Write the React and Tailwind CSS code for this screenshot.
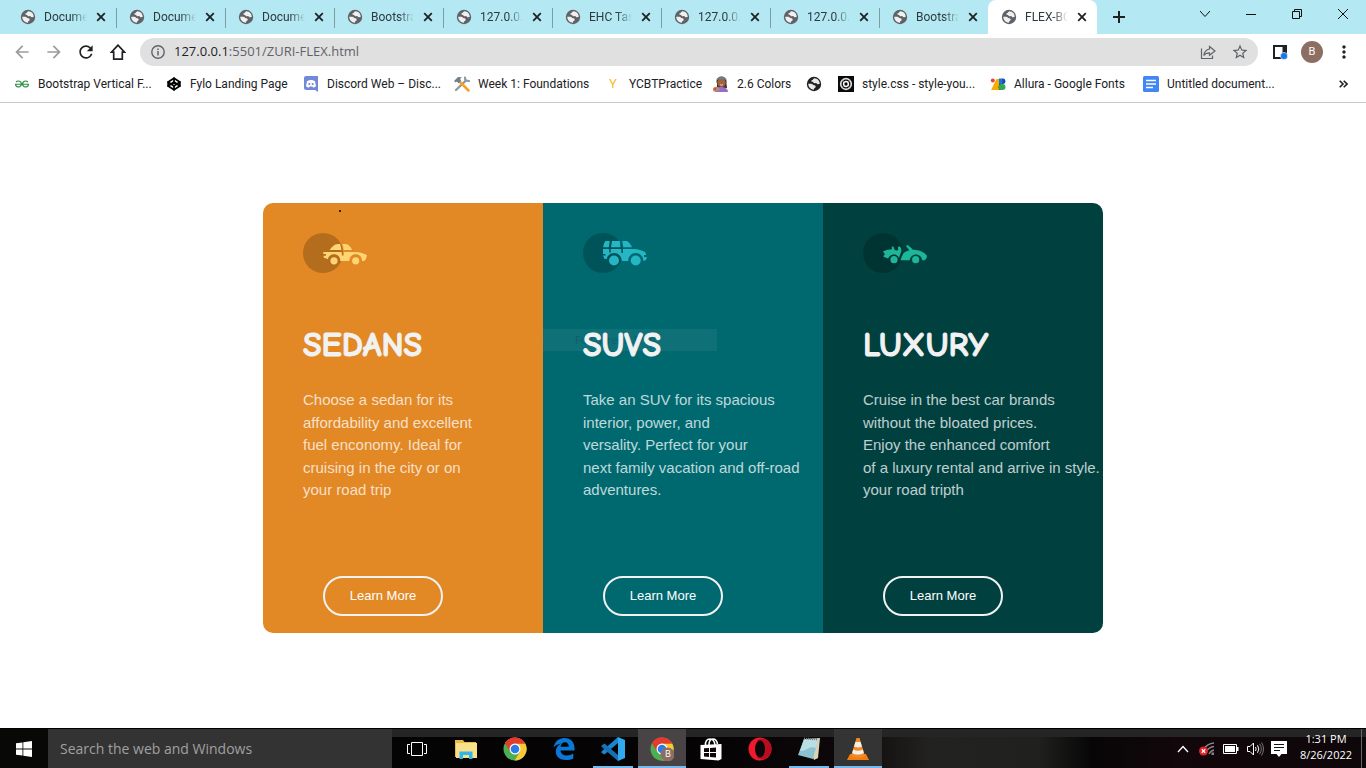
import React from "react";
import { MdArrowBack, MdArrowForward, MdRefresh, MdMoreVert, MdStarBorder } from "react-icons/md";
import { SiGeeksforgeeks } from "react-icons/si";
import { Codepen } from "lucide-react";

const Globe = ({ className = "text-[#5f6368]" }) => (
  <svg viewBox="0 0 16 16" className={"size-4 shrink-0 " + className} aria-hidden="true">
    <circle cx="8" cy="8" r="7.2" fill="currentColor" />
    <path
      d="M8.3 2.300 C7.200 3 6.800 4.300 5.300 4.600 C4.900 5.600 6 6 7 6 C7.700 6.300 7.400 7.200 8.300 7.300 C9 7.300 9.400 6.800 10.100 7 C10.900 7.200 10.800 8.200 11.600 8.200 L13.700 7.900 C13.800 5 11.600 2.400 8.300 2.300Z M2.200 7.800 C2.400 11.300 5 13.600 8 13.800 L8.100 12.500 C8.400 11.800 9.500 11.800 9.700 10.900 C9.800 9.900 9.100 9.200 8 9.200 C6.900 9.100 6.600 7.900 5.300 7.800Z"
      fill="#fff" fillOpacity=".9"
    />
  </svg>
);

const tabs = ["Documents", "Documents", "Documents", "Bootstrap 5", "127.0.0.1:5501", "EHC Tasks list", "127.0.0.1:5501", "127.0.0.1:5501", "Bootstrap 5", "FLEX-BOX"];

function Tab({ title, active }) {
  return (
    <div className={"relative flex h-[34px] w-[109px] shrink items-center pl-[13px] pr-2 " + (active ? "rounded-t-lg bg-white" : "")}>
      <Globe />
      <a href="#tab" className="ml-2 w-[46px] overflow-hidden whitespace-nowrap text-[12px] text-[#2c3a3e] [mask-image:linear-gradient(to_right,black_65%,transparent)]">
        {title}
      </a>
      <button aria-label={"Close " + title} className="ml-1.5 flex size-4 items-center justify-center">
        <svg viewBox="0 0 10 10" className="size-2.5"><path d="M1.2 1.2l7.6 7.6M8.8 1.2L1.2 8.8" stroke="#202124" strokeWidth="1.8" /></svg>
      </button>
      {!active && <span className="absolute -right-px top-2 h-5 w-px bg-[#7b9da4]" />}
    </div>
  );
}

const Discord = () => (
  <svg viewBox="0 0 16 16" className="size-4"><path d="M1 2a2 2 0 012-2h12v16l-3-2H3a2 2 0 01-2-2z" fill="#7289da" /><path d="M4 5.2c2.4-1.5 5.600-1.500 8 0l1 5c-1.200 1-2 1.200-3 1.300l-.7-1H6.700l-.7 1c-1-.1-1.800-.3-3-1.300z" fill="#fff" /><circle cx="6.300" cy="8" r="1.100" fill="#7289da" /><circle cx="9.700" cy="8" r="1.100" fill="#7289da" /></svg>
);
const Tools = () => (
  <svg viewBox="0 0 16 16" className="size-4"><path d="M2 14L12 4.500" stroke="#8b9aa5" strokeWidth="2.400" strokeLinecap="round" /><path d="M11 1.500l.4 3 3.600.5" fill="none" stroke="#8b9aa5" strokeWidth="2.200" strokeLinecap="round" strokeLinejoin="round" /><path d="M5.500 5.500l9 9" stroke="#ff9d1c" strokeWidth="2.500" strokeLinecap="round" /><path d="M0 5l4-4 4 .2-1.800 1.600L7 5 4.500 7.300 2.800 5.400 1.700 6.400z" fill="#6e808c" /></svg>
);
const Artist = () => (
  <svg viewBox="0 0 16 16" className="size-4"><circle cx="8.500" cy="5.500" r="5" fill="#46302c" /><path d="M4 4h9l1 8H4z" fill="#46302c" /><path d="M2 16c0-4 3-5 6-5s7 1 7 5z" fill="#9b6bc9" /><circle cx="8.500" cy="6.800" r="4.200" fill="#a0623f" /><path d="M3.500 4.200C3.500-.5 13.500-.5 13.500 4.200c-3-1.400-7-1.400-10 0z" fill="#6b7f8c" /><path d="M0 12.500c1-2.500 6-2.300 7 .5.500 2-6 3.500-7 1.500z" fill="#c98756" /><circle cx="2.200" cy="13" r="1.100" fill="#e33d4e" /><circle cx="5" cy="13.500" r="1" fill="#44b7e8" /><path d="M7 8.600q1.500 1.200 3 0" stroke="#fff" strokeWidth=".7" fill="none" /></svg>
);
const Spiral = () => (
  <svg viewBox="0 0 16 16" className="size-4"><path fill="#0a0a0a" d="M0 0h16v16H0z" /><circle cx="8" cy="8" r="5.300" fill="none" stroke="#ddd" strokeWidth="1.700" /><circle cx="8" cy="8" r="2.400" fill="none" stroke="#fff" strokeWidth="1.500" /><path d="M4 3.500L7 6M12 12.500L9 10M12.500 4L10 7M3.500 12L6 9" stroke="#999" strokeWidth=".6" /></svg>
);
const Fonts = () => (
  <svg viewBox="0 0 16 16" className="size-4"><path d="M6.500 3H9v11H7.500L4.500 14H1z" fill="#fbab00" /><circle cx="2.800" cy="4.500" r="2" fill="#ea4335" /><path d="M9 2.500h3.500a2.700 2.700 0 010 5.500H9z" fill="#1a73e8" /><path d="M12.500 2.500a2.700 2.700 0 010 5.500z" fill="#174ea6" /><path d="M9 8h3.500a3 3 0 010 6H9z" fill="#34a853" /><path d="M9 8h3a3 3 0 00-1 6H9z" fill="#0d652d" /></svg>
);
const Docs = () => (
  <svg viewBox="0 0 16 16" className="size-4"><rect width="16" height="16" rx="1.500" fill="#4285f4" /><path d="M3 4.500h10M3 8h10M3 11.500h7" stroke="#fff" strokeWidth="1.500" /></svg>
);

const bookmarks = [
  ["Bootstrap Vertical F...", <SiGeeksforgeeks className="size-3.5 text-[#2f8d46]" />],
  ["Fylo Landing Page", <Codepen strokeWidth={3} className="size-3.5 text-black" />],
  ["Discord Web – Disc...", <Discord />],
  ["Week 1: Foundations", <Tools />],
  ["YCBTPractice", <span className="text-[13px] text-[#f5bd27]">Y</span>],
  ["2.6 Colors", <Artist />],
  ["", <Globe className="text-[#202124]" />],
  ["style.css - style-you...", <Spiral />],
  ["Allura - Google Fonts", <Fonts />],
  ["Untitled document...", <Docs />],
];

const winBtn = "flex h-7 w-[46px] items-center justify-center";
const toolBtn = "flex h-8 w-8 shrink-0 items-center justify-center";

function Browser() {
  return (
    <header className="font-[Roboto,'Open_Sans',sans-serif]">
      <div className="flex h-[34px] bg-[#b4e8f2] pl-[7px]">
        <nav aria-label="Tabs" className="flex">
          {tabs.map((t, i) => <Tab key={i} title={t} active={i === 9} />)}
        </nav>
        <button aria-label="New tab" className="flex w-11 items-center justify-center">
          <svg viewBox="0 0 12 12" className="size-3"><path d="M6 0v12M0 6h12" stroke="#202124" strokeWidth="2" /></svg>
        </button>
        <div className="ml-auto flex">
          <button aria-label="Search tabs" className={winBtn}><svg viewBox="0 0 12 8" className="h-2 w-3"><path d="M1 1l5 5.500L11 1" fill="none" stroke="#111" /></svg></button>
          <button aria-label="Minimize" className={winBtn}><svg viewBox="0 0 10 10" className="size-2.5"><path d="M0 5.500h10" stroke="#111" /></svg></button>
          <button aria-label="Restore" className={winBtn}><svg viewBox="0 0 10 10" className="size-2.5"><path d="M.5 2.500h7v7h-7zM2.500 2.500v-2h7v7h-2" fill="none" stroke="#111" /></svg></button>
          <button aria-label="Close window" className={winBtn}><svg viewBox="0 0 10 10" className="size-2.5"><path d="M0 0l10 10M10 0L0 10" stroke="#111" /></svg></button>
        </div>
      </div>
      <div className="flex h-9 items-center bg-white px-1.5">
        <button aria-label="Back" className={toolBtn}><MdArrowBack className="size-5 text-[#9a9c9f]" /></button>
        <button aria-label="Forward" className={toolBtn}><MdArrowForward className="size-5 text-[#9a9c9f]" /></button>
        <button aria-label="Reload" className={toolBtn}><MdRefresh className="size-5 text-[#202124]" /></button>
        <button aria-label="Home" className={toolBtn}>
          <svg viewBox="0 0 16 16" className="size-4"><path d="M8 1.200L1.500 8.200H3.700v7h8.600v-7h2.200z" fill="none" stroke="#202124" strokeWidth="1.700" /></svg>
        </button>
        <div className="mx-1.5 flex h-7 flex-1 items-center rounded-full bg-[#e0e0e0] pl-[11px] pr-0.5">
          <svg viewBox="0 0 14 14" className="size-3.5 shrink-0"><circle cx="7" cy="7" r="6.200" fill="none" stroke="#5f6368" strokeWidth="1.400" /><path d="M7 6v4.500M7 3.500V5" stroke="#5f6368" strokeWidth="1.500" /></svg>
          <label className="ml-[9px] flex min-w-0 flex-1 font-['Open_Sans','Noto_Sans',sans-serif] text-[13px] text-[#202124]">
            <span>127.0.0.1</span>
            <input aria-label="Address" defaultValue=":5501/ZURI-FLEX.html" className="min-w-0 flex-1 bg-transparent text-[#5f6368] outline-none" />
          </label>
          <button aria-label="Share" className="flex w-8 justify-center"><svg viewBox="0 0 16 16" className="size-4"><path d="M1.500 4.500v10h11v-3" fill="none" stroke="#5f6368" strokeWidth="1.200" /><path d="M9.500 2.500L15 7l-5.500 4.300V8.800C7 8.800 5 9.800 3.800 11.500 4.300 7.500 6.500 5.500 9.500 5z" fill="none" stroke="#5f6368" strokeWidth="1.200" /></svg></button>
          <button aria-label="Bookmark this page" className="flex w-8 justify-center"><MdStarBorder className="size-[18px] text-[#5f6368]" /></button>
        </div>
        <button aria-label="Side panel" className={toolBtn}><svg viewBox="0 0 16 16" className="size-4"><path d="M1 1h14v14H1z" fill="#202124" /><path d="M3 3h7.500v10H3z" fill="#fff" /><circle cx="12" cy="12" r="3.600" fill="#1a73e8" stroke="#fff" strokeWidth=".6" /></svg></button>
        <button aria-label="Profile" className={toolBtn}><span className="flex size-[22px] items-center justify-center rounded-full bg-[#8d6e63] text-[11px] text-white">B</span></button>
        <button aria-label="Menu" className={toolBtn}><MdMoreVert className="size-5 text-[#202124]" /></button>
      </div>
      <nav aria-label="Bookmarks" className="flex h-[33px] items-center border-b border-[#c8c8c8] bg-white pb-1 pl-3.5 pr-[18px]">
        <div className="grid flex-1 grid-cols-[152px_137px_151px_151px_108px_93px_32px_152px_153px_auto]">
          {bookmarks.map(([label, icon], i) => (
            <a key={i} href="#bookmark" aria-label={label || "Bookmark"} className="flex h-5 items-center gap-2 whitespace-nowrap text-[12px] text-[#202124]">
              <span className="flex w-4 shrink-0 justify-center">{icon}</span>{label}
            </a>
          ))}
        </div>
        <button aria-label="More bookmarks"><svg viewBox="0 0 9 8" className="h-2 w-[9px]"><path d="M.7.800L4 4 .7 7.200M4.700.8L8 4 4.700 7.200" fill="none" stroke="#202124" strokeWidth="1.600" /></svg></button>
      </nav>
    </header>
  );
}

const Sedan = () => (
  <svg viewBox="0 0 64 40" className="h-10 w-16">
    <circle cx="20" cy="20" r="20" fill="#000" fillOpacity=".2" />
    <g fill="#ffd473">
      <path d="M26.500 17C29 14 31.500 11 35 11h2c.8 2 1.200 4 1.400 6zM39.300 11H42c3.500 0 5.800 3 7.200 6h-8.600c-.1-2.200-.5-4.200-1.300-6z" />
      <path d="M20.500 19H38.600c.2 1.300.3 2.300.3 3.500h1.900c0-1.300 0-2.400-.1-3.500h11.200c5 .2 9.500 1.400 12 3-.2 2.300-1 5-2.800 6H59c.2-3.800-2.500-6.800-6.300-6.800s-6.500 3-6.300 6.800h-9.100c.2-3.800-2.500-6.800-6.300-6.800-3 0-5.400 2-6.200 4.700-1.400-.2-3-.6-4.300-1.600l.2-1.600h2.300v-1.600h-2.800z" />
      <circle cx="31" cy="27.800" r="3.600" /><circle cx="52.700" cy="27.800" r="3.600" />
    </g>
  </svg>
);
const Suv = () => (
  <svg viewBox="0 0 64 40" className="h-10 w-16">
    <circle cx="20" cy="20" r="20" fill="#000" fillOpacity=".2" />
    <g fill="#25b5c3">
      <path d="M22.500 8h4.300l-1 6.200h-5.600c.2-2.500 1-4.700 2.300-6.200zM29 8h7.800l.8 6.200H28zM39.300 8H44c2.300 1.500 4 3.800 5 6.200h-8.700z" />
      <path d="M20 16h6.200v3.500h1.500V16h10.500l.3 4h1.500L39.800 16H52c4 .4 8 1.500 10.500 3.500l.7 2.500H61v2h3l-.8 2.500c-.7 1-1.700 1.400-2.900 1.500.2-4.500-3.300-8-7.600-8-4.200 0-7.700 3.500-7.500 8h-6.500c.2-4.500-3.300-8-7.600-8-3.700 0-6.700 2.500-7.400 6h-2.200L20 22.500h2.500V21H20z" />
      <circle cx="31" cy="27.500" r="5" /><circle cx="52.700" cy="27.500" r="5" />
    </g>
  </svg>
);
const Luxury = () => (
  <svg viewBox="0 0 64 40" className="h-10 w-16">
    <circle cx="20" cy="20" r="20" fill="#000" fillOpacity=".2" />
    <g fill="#1db699">
      <path d="M20 18.500c3-1.500 6.500-2 9-2.200l-.3-2.600 1.700-.2 1.300 3.500c1.200.6 2.300.6 3.400.1L35 13.800l2-.3c1.500 2.200 1.600 4 1.100 5.500-.6 2-1.600 4.200-2.200 6.200-.3-2-2.200-3.800-4.900-3.800-3.100 0-5.100 2-5.800 4-2-.4-4-1.200-5-2.200l1.700-2z" />
      <path d="M43 13l1.500-1c2.500 1.800 4.500 3.400 5.300 4.800 5.500 0 11.700 2 14.200 6.200-.2 2-1 3.500-2.500 4.300h-2.300c-.3-3.400-2.900-5.900-6.200-5.900s-6 2.500-6.300 5.900h-9.200c1-3.500 2.500-7.500 5-8.500l3.800-1.500z" />
      <circle cx="31" cy="26.700" r="3.600" /><circle cx="52.700" cy="26.700" r="3.600" />
    </g>
  </svg>
);

const cars = [
  { name: "SEDANS", Icon: Sedan, bg: "bg-[#e28825]", lines: ["Choose a sedan for its", "affordability and excellent", "fuel enconomy. Ideal for", "cruising in the city or on", "your road trip"] },
  { name: "SUVS", Icon: Suv, bg: "bg-[#006970]", lines: ["Take an SUV for its spacious", "interior, power, and", "versality. Perfect for your", "next family vacation and off-road", "adventures."] },
  { name: "LUXURY", Icon: Luxury, bg: "bg-[#004140]", lines: ["Cruise in the best car brands", "without the bloated prices.", "Enjoy the enhanced comfort", "of a luxury rental and arrive in style.", "your road tripth"] },
];

function Card({ car, index }) {
  return (
    <section className={"relative flex flex-col items-start pb-[17px] pl-10 pt-[30px] " + car.bg}>
      {index === 0 && <span className="absolute left-[76px] top-[7px] size-0.5 rounded-full bg-black" />}
      {index === 1 && (
        <span className="absolute left-0 top-[126px] flex h-[22px] w-[174px] items-center bg-[#0f7078] pl-8 font-['Open_Sans',sans-serif] text-[11px] text-[#0c6067]">Full-screen Snip</span>
      )}
      <car.Icon />
      <h2 className="relative mt-[52px] font-['Comic_Sans_MS','Comic_Neue','Noto_Sans',sans-serif] text-[34px] font-bold leading-10 text-[#f2f2f2] [-webkit-text-stroke:1px_#f2f2f2]">{car.name}</h2>
      <p className="mb-[74px] mt-6 whitespace-nowrap text-[15px] leading-normal text-white/75">
        {car.lines.map((l, i) => <React.Fragment key={i}>{l}<br /></React.Fragment>)}
      </p>
      <button className="ml-5 h-10 w-[120px] rounded-full border-2 border-[#f2f2f2] text-[13px] font-medium text-white">Learn More</button>
    </section>
  );
}

const Chrome = ({ badge }) => (
  <svg viewBox="0 0 24 24" className="size-6">
    <circle cx="12" cy="12" r="11.500" fill="#4caf50" />
    <path d="M12 12L2 6.200A11.500 11.500 0 0122 6.300z" fill="#e33b2e" />
    <path d="M12 6.500h10.200A11.500 11.500 0 0111.700 23.500L17 14.500z" fill="#fcc934" />
    <path d="M2 6.200L7.300 15 12 6.500h10A11.500 11.500 0 002 6.200z" fill="#e33b2e" />
    <circle cx="12" cy="12" r="5.500" fill="#fff" /><circle cx="12" cy="12" r="4.300" fill="#2a7de9" />
    {badge && <circle cx="17.500" cy="17.500" r="7" fill="#8d6e63" />}
  </svg>
);
const Explorer = () => (
  <svg viewBox="0 0 24 24" className="size-6"><path d="M1 3h8l1.500 2H22v15H1z" fill="#e9b94b" /><path d="M2 6h21v15H2z" fill="#fbe08c" /><path d="M5.500 22v-7.500h13V22h-3.500v-4H9v4z" fill="#2fb6ea" /></svg>
);
const Edge = () => (
  <svg viewBox="0 0 24 24" className="size-6"><path d="M1.500 11C2.500 4.500 7 1 12.500 1 18.500 1 22.500 5 22.500 11v2.500H8.500c.2 3.500 3 5 6.300 5 2.400 0 4.700-.7 6.500-1.900v4.800C19.200 22.500 16.500 23 14 23 7.800 23 3.800 19.500 3.800 14.500c0-3.500 2-6.500 5.300-8C4.900 7 2.600 9 1.500 11zM8.600 9.800h8.200C16.800 7 15.300 5.300 12.800 5.300c-2.300 0-3.900 1.900-4.200 4.500z" fill="#0a78d7" /></svg>
);
const Code = () => (
  <svg viewBox="0 0 24 24" className="size-6"><path d="M17 0v6L3.500 17.500.500 15.800v-1.300z" fill="#1887d2" /><path d="M.500 8.500l3-2L17 18v6L.500 9.800z" fill="#1672b6" /><path d="M17 0l7 3v18l-7 3z" fill="#32a9ef" /></svg>
);
const Store = () => (
  <svg viewBox="0 0 24 24" className="size-6"><path d="M1.500 8l21-1v15l-3 1.500-18-1.500z" fill="#fff" /><path d="M6.500 9C6 4 8 2 11 2s4.500 2 5 6M10 8c0-4 1.500-6 4-6s4 2 4.500 5" fill="none" stroke="#fff" strokeWidth="1.600" /><path d="M5 11.300l5-.3v4H5zM11 11l6-.4V15h-6zM5 16h5v4l-5-.4zM11 16h6v4.500l-6-.4z" fill="#100508" /></svg>
);
const Opera = () => (
  <svg viewBox="0 0 24 24" className="size-6"><ellipse cx="12" cy="12" rx="11.500" ry="11.500" fill="#f0192d" /><path d="M9 3.500C15-1 23.500 4 23.500 12S15 25 9 20.500z" fill="#b70d1e" /><ellipse cx="12" cy="12" rx="5" ry="8.500" fill="#0b0708" /></svg>
);
const Notepad = () => (
  <svg viewBox="0 0 24 24" className="size-6"><path d="M8 2l15-1-2 20-4 2z" fill="#dcd2b5" /><path d="M7 2l14 1-5 19L1 18z" fill="#8bc2cf" /><path d="M7 2l14 1-2 8C13 8 9 14 3 14z" fill="#b9dfe5" /><path d="M7 1.500l14 1" stroke="#737d80" strokeWidth="2" strokeDasharray="1 1" /></svg>
);
const Vlc = () => (
  <svg viewBox="0 0 24 24" className="size-6"><path d="M4 17h16l3 6H1z" fill="#f07c13" /><path d="M10.500 1h3L19 19c-3 2.500-11 2.500-14 0z" fill="#f48b20" /><path d="M9.400 5h5.200l1.300 4.500c-2 1.200-6 1.200-7.800 0zM7.200 12.500c3 1.600 6.600 1.600 9.600 0l1 3.500c-3 2-8.600 2-11.600 0z" fill="#eef0f2" /></svg>
);
const TaskView = () => (
  <svg viewBox="0 0 20 14" className="h-3.5 w-5"><path d="M4.500.5h11v13h-11zM3 2.500H.500v9H3M17 2.500h2.500v9H17" fill="none" stroke="#fff" /></svg>
);

const apps = [
  ["Task view", <TaskView />], ["File Explorer", <Explorer />], ["Chrome", <Chrome />], ["Edge", <Edge />],
  ["Visual Studio Code", <Code />, "running"], ["Chrome profile B", <Chrome badge />, "active"], ["Store", <Store />],
  ["Opera", <Opera />], ["Notepad", <Notepad />, "running"], ["VLC", <Vlc />, "open"],
];

function Taskbar() {
  const tray = "flex w-6 items-center justify-center";
  return (
    <footer className="flex h-10 border-t border-black bg-[linear-gradient(to_bottom,#252525_8px,transparent_8px),linear-gradient(to_right,#050503_0%,#050304_50%,#0d0709_62%,#222220_68%,#20201f_76%,#070606_80%,#12070b_86%,#0e070a_100%)] font-['Open_Sans','Noto_Sans',sans-serif] text-white">
      <button aria-label="Start" className="flex w-12 items-center justify-center bg-[#080906]">
        <svg viewBox="0 0 16 16" className="size-4"><path d="M0 2.300L6.500 1.400v6.200H0zM7.300 1.300L16 0v7.600H7.300zM0 8.400h6.500v6.200L0 13.700zM7.300 8.400H16V16l-8.700-1.300z" fill="#fff" /></svg>
      </button>
      <input aria-label="Search the web and Windows" placeholder="Search the web and Windows" className="w-[344px] bg-[#333] px-3 text-[14px] text-white outline-none placeholder:text-[#a0a0a0]" />
      <nav aria-label="Taskbar" className="flex gap-px pl-px">
        {apps.map(([name, icon, state]) => (
          <button key={name} aria-label={name} className={"relative flex w-12 items-center justify-center " + (state === "active" ? "bg-[#484446]" : state === "open" ? "bg-[#343434]" : "")}>
            {icon}
            {name === "Chrome profile B" && <span className="absolute left-[23px] top-[17px] w-3.5 text-center text-[9px] leading-4">B</span>}
            {state && <span className={"absolute bottom-0 h-0.5 bg-[#76b9ed] " + (state === "running" ? "inset-x-1" : "inset-x-0")} />}
          </button>
        ))}
      </nav>
      <div className="ml-auto flex">
        <button aria-label="Show hidden icons" className={tray}><svg viewBox="0 0 12 8" className="h-2 w-3"><path d="M1 7l5-5.500L11 7" fill="none" stroke="#fff" strokeWidth="1.300" /></svg></button>
        <button aria-label="Network" className={tray}><svg viewBox="0 0 16 14" className="h-3.5 w-4"><path d="M5 7c2-3.500 5-5.500 10-6M7 9.500c2-3 4-4.500 8-5M10 12c1-2 2.500-3.500 5-4" fill="none" stroke="#8a8589" strokeWidth="1.300" /><path d="M12.500 10.500H15V13h-2.500z" fill="#8a8589" /><circle cx="4.500" cy="9" r="4.500" fill="#e3242b" /><path d="M2.800 7.300l3.400 3.400M6.200 7.300l-3.400 3.400" stroke="#fff" strokeWidth="1.300" /></svg></button>
        <button aria-label="Battery" className={tray}><svg viewBox="0 0 16 10" className="h-2.5 w-4"><path d="M.5.5h13v9H.500z" fill="none" stroke="#fff" /><path d="M2 2h10v6H2zM14 3h1.500v4H14z" fill="#fff" /></svg></button>
        <button aria-label="Volume" className={tray}><svg viewBox="0 0 17 14" className="h-3.5 w-[17px]"><path d="M.5 4.500H3L6.500 1v12L3 9.500H.500z" fill="none" stroke="#fff" /><path d="M8.500 5q1.300 2 0 4M10.500 3.200q2.600 3.800 0 7.600" fill="none" stroke="#fff" /><path d="M12.500 1.800q3.600 5.200 0 10.400M14.500.5q4 6.500 0 13" fill="none" stroke="#777" /></svg></button>
        <button aria-label="Notifications" className={tray}><svg viewBox="0 0 16 16" className="size-4"><path d="M0 0h16v13h-5.500L8 16l-2.500-3H0z" fill="#fff" /><path d="M3 3.500h10M3 6.500h10M3 9.500h6" stroke="#111" strokeWidth="1.200" /></svg></button>
        <time className="flex w-[70px] flex-col items-center pt-0.5 whitespace-nowrap text-[11px] leading-4"><span>1:31 PM</span><span>8/26/2022</span></time>
        <button aria-label="Show desktop" className="w-[5px] border-l border-[#666]" />
      </div>
    </footer>
  );
}

export default function App() {
  return (
    <div className="flex min-h-screen flex-col bg-white font-['Liberation_Sans',Arial,sans-serif]">
      <Browser />
      <main className="flex-1 pt-[100px]">
        <div className="mx-auto grid max-w-[840px] grid-cols-3 overflow-hidden rounded-[10px]">
          {cars.map((c, i) => <Card key={c.name} car={c} index={i} />)}
        </div>
      </main>
      <Taskbar />
    </div>
  );
}
